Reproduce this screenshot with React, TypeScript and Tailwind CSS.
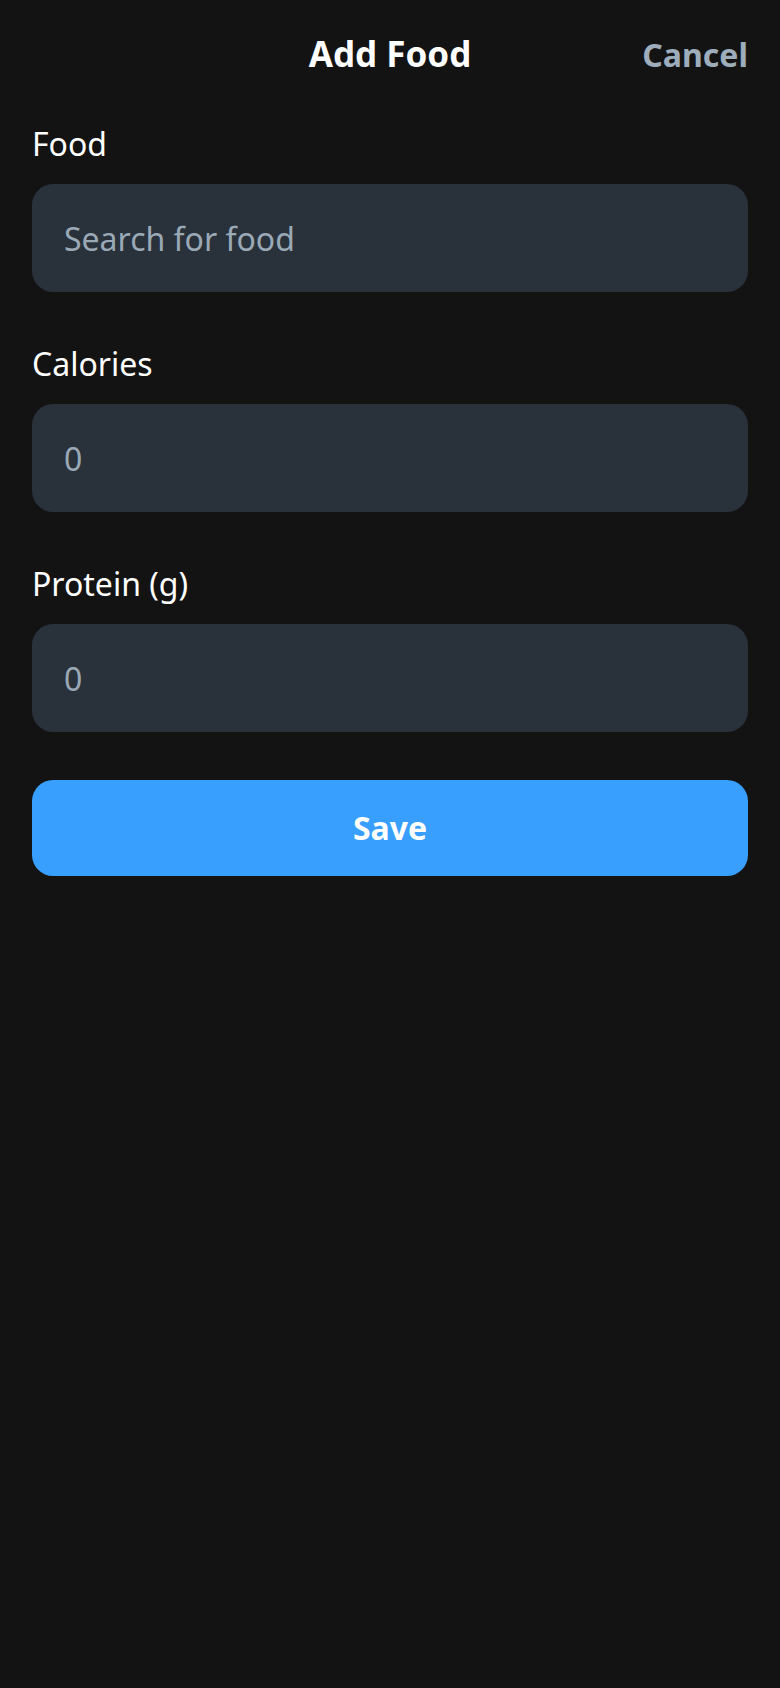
import React from "react";

const fields = [
  { label: "Food", placeholder: "Search for food", type: "text" },
  { label: "Calories", placeholder: "0", type: "text" },
  { label: "Protein (g)", placeholder: "0", type: "text" },
];

export default function App() {
  return (
    <div
      className="min-h-[1688px] w-full bg-[#131313] text-white"
      style={{ fontFamily: '"Noto Sans", "Open Sans", sans-serif' }}
    >
      <header className="grid grid-cols-[1fr_auto_1fr] items-baseline px-[32px] pt-[29px]">
        <div />
        <h1 className="text-[35px] font-bold leading-[49px] text-white">Add Food</h1>
        <button className="justify-self-end text-[32px] font-bold leading-[44px] text-[#9dadbc]">
          Cancel
        </button>
      </header>

      <main className="flex flex-col px-[32px] pt-[43px]">
        {fields.map((f) => (
          <div key={f.label} className="mb-[49px] flex flex-col">
            <label className="mt-[1px] text-[32px] leading-[44px] text-white">{f.label}</label>
            <input
              type={f.type}
              placeholder={f.placeholder}
              className="mt-[18px] h-[108px] w-full rounded-[21px] bg-[#29313b] px-[32px] text-[32px] text-white outline-none placeholder:text-[#9aa9b6]"
            />
          </div>
        ))}
        <button className="-mt-[1px] flex h-[96px] w-full items-center justify-center rounded-[21px] bg-[#389ffe] text-[32px] font-bold text-white">
          Save
        </button>
      </main>
    </div>
  );
}
